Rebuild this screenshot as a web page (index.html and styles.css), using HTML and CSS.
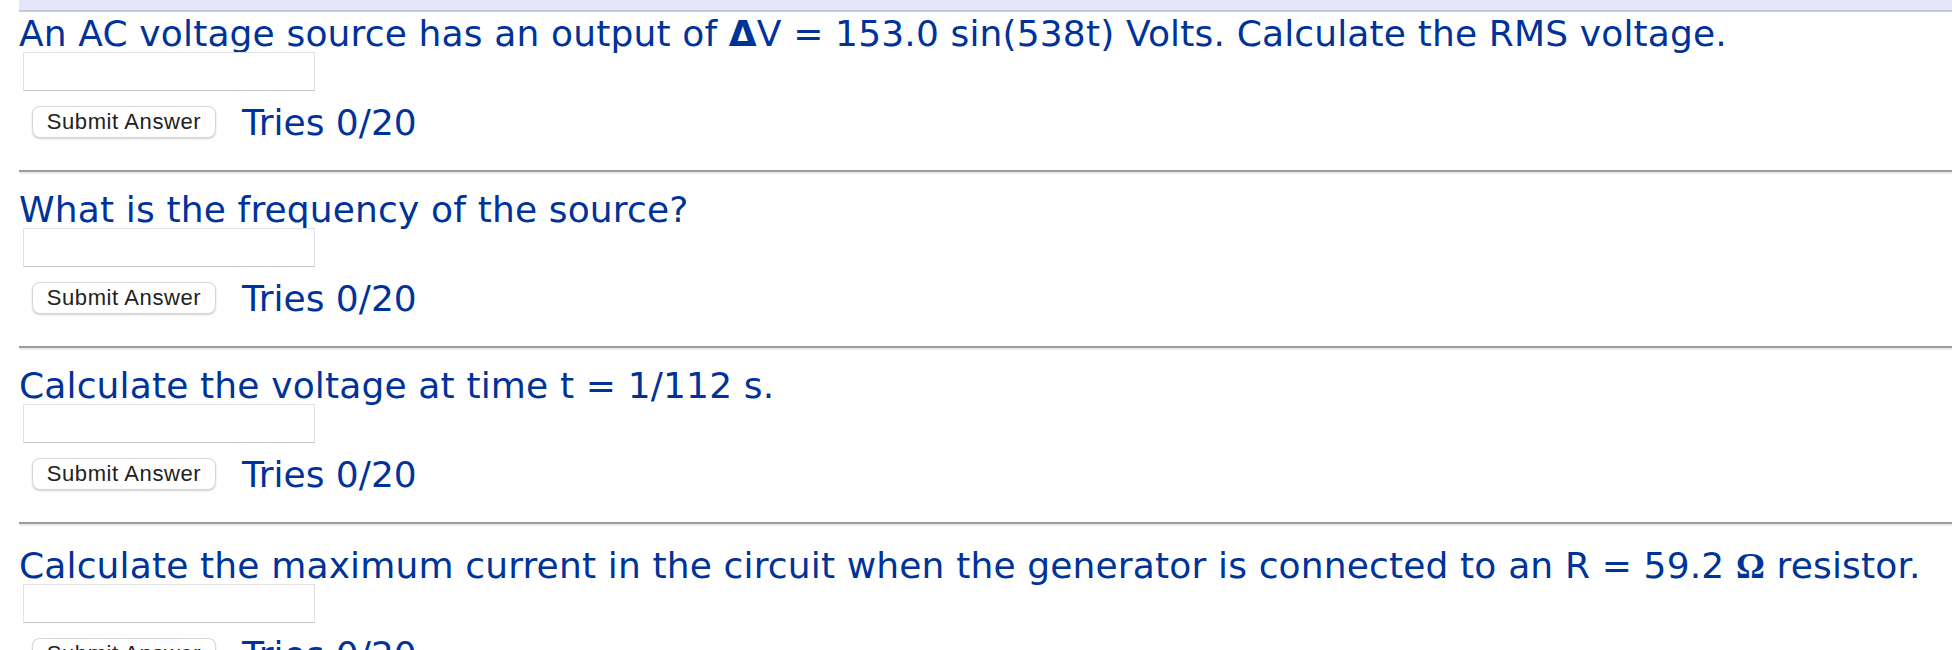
FILE: index.html
```html
<!DOCTYPE html>
<html>
<head>
<meta charset="utf-8">
<link rel="stylesheet" href="styles.css">
</head>
<body>
<div class="page">
  <div class="band"></div>

  <div class="question question--first">
    <p class="q-text">An AC voltage source has an output of <span class="delta">Δ</span>V = 153.0 sin(538t) Volts. Calculate the RMS voltage.</p>
    <div class="answer"><input class="answer-input" type="text"></div>
    <div class="submit-row"><button class="submit-btn">Submit Answer</button><span class="tries">Tries 0/20</span></div>
  </div>
  <hr class="sep">

  <div class="question">
    <p class="q-text">What is the frequency of the source?</p>
    <div class="answer"><input class="answer-input" type="text"></div>
    <div class="submit-row"><button class="submit-btn">Submit Answer</button><span class="tries">Tries 0/20</span></div>
  </div>
  <hr class="sep">

  <div class="question">
    <p class="q-text">Calculate the voltage at time t = 1/112 s.</p>
    <div class="answer"><input class="answer-input" type="text"></div>
    <div class="submit-row"><button class="submit-btn">Submit Answer</button><span class="tries">Tries 0/20</span></div>
  </div>
  <hr class="sep">

  <div class="question question--tall">
    <p class="q-text">Calculate the maximum current in the circuit when the generator is connected to an R = 59.2 <span class="omega">Ω</span> resistor.</p>
    <div class="answer"><input class="answer-input" type="text"></div>
    <div class="submit-row"><button class="submit-btn">Submit Answer</button><span class="tries">Tries 0/20</span></div>
  </div>
</div>
</body>
</html>
```

FILE: styles.css
```css
html, body {
  margin: 0;
  padding: 0;
  background: #ffffff;
}

.page {
  padding-left: 19px;
  font-family: "DejaVu Sans", Verdana, sans-serif;
  color: #003399;
  overflow: hidden;
}

.band {
  height: 10px;
  background: #e6e6fa;
  border-bottom: 2px solid #c8c8c8;
}

.question--first {
  padding-top: 4px;
}

.question--tall {
  padding-top: 4px;
}

.q-text {
  margin: 0;
  font-size: 36px;
  line-height: 36px;
  letter-spacing: 0.15px;
  white-space: nowrap;
}

.delta {
  font-weight: bold;
}

.omega {
  font-family: "Liberation Serif", "Times New Roman", serif;
  font-weight: bold;
}

.answer {
  display: flex;
  height: 39px;
  padding-left: 4px;
}

.answer-input {
  box-sizing: border-box;
  width: 292px;
  height: 39px;
  margin: 0;
  border: 1px solid #e2e2e2;
  border-bottom-color: #c4c4c4;
  background: #ffffff;
}

.submit-row {
  display: flex;
  align-items: flex-start;
  height: 32px;
  margin-top: 15px;
  padding-left: 13px;
}

.submit-btn {
  box-sizing: border-box;
  width: 184px;
  height: 32px;
  margin: 0;
  padding: 0;
  border: 1px solid #d6d6d6;
  border-radius: 8px;
  background: #ffffff;
  box-shadow: 0 1px 2px rgba(0, 0, 0, 0.18);
  font-family: "Liberation Sans", Arial, sans-serif;
  font-size: 22px;
  letter-spacing: 0.6px;
  color: #222222;
}

.tries {
  margin-left: 26px;
  padding-top: 2px;
  font-size: 36px;
  line-height: 30px;
}

.sep {
  height: 0;
  margin: 32px 0 18px;
  border: 0;
  border-top: 2px solid #9a9a9a;
  border-bottom: 2px solid #ececec;
}
```
